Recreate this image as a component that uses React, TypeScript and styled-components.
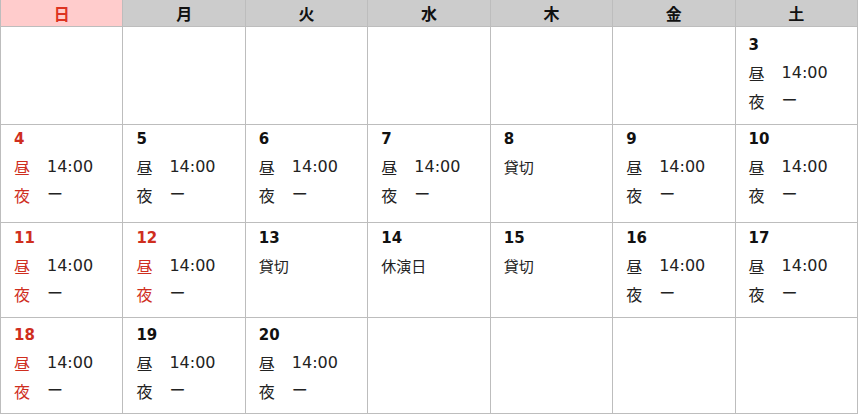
import React from 'react'
import styled, { createGlobalStyle } from 'styled-components'

const GlobalStyle = createGlobalStyle`
  html, body {
    margin: 0;
    padding: 0;
    background: #fff;
  }
  body {
    font-family: 'DejaVu Sans', Verdana, 'Noto Sans CJK JP', sans-serif;
    color: #222;
  }
`

const RED = '#cf2e1e'
const LINE = '#bdbdbd'

type Day =
  | null
  | { date: number; kind: 'show'; noon: string; night: string; holiday?: boolean }
  | { date: number; kind: 'note'; text: string; holiday?: boolean }

const show = (date: number, holiday = false): Day => ({ date, kind: 'show', noon: '14:00', night: 'ー', holiday })
const note = (date: number, text: string): Day => ({ date, kind: 'note', text })

const weekdays = ['日', '月', '火', '水', '木', '金', '土']

const weeks: { height: number; padTop: number; days: Day[] }[] = [
  { height: 98, padTop: 4, days: [null, null, null, null, null, null, show(3)] },
  { height: 98, padTop: 0, days: [show(4), show(5), show(6), show(7), note(8, '貸切'), show(9), show(10)] },
  { height: 95, padTop: 1, days: [show(11), show(12, true), note(13, '貸切'), note(14, '休演日'), note(15, '貸切'), show(16), show(17)] },
  { height: 96, padTop: 3, days: [show(18), show(19), show(20), null, null, null, null] },
]

const Calendar = styled.div`
  width: 858px;
  display: grid;
  grid-template-columns: repeat(7, 1fr);
  border-left: 1px solid ${LINE};
  box-sizing: border-box;
`

const HeaderCell = styled.div<{ $sunday?: boolean }>`
  height: 27px;
  box-sizing: border-box;
  border-right: 1px solid ${LINE};
  border-bottom: 1px solid ${LINE};
  background: ${(p) => (p.$sunday ? '#ffcccc' : '#cccccc')};
  color: ${(p) => (p.$sunday ? '#dd3322' : '#111')};
  display: flex;
  align-items: center;
  justify-content: center;
  font-family: 'Noto Sans CJK JP', sans-serif;
  font-weight: 700;
  font-size: 16px;
`

const DayCell = styled.div<{ $height: number; $padTop: number; $red?: boolean }>`
  height: ${(p) => p.$height}px;
  box-sizing: border-box;
  border-right: 1px solid ${LINE};
  border-bottom: 1px solid ${LINE};
  padding: ${(p) => p.$padTop}px 8px 0 13px;
  color: ${(p) => (p.$red ? RED : '#222')};
  display: flex;
  flex-direction: column;
`

const DayNumber = styled.div<{ $red?: boolean }>`
  line-height: 28px;
  font-size: 15px;
  font-weight: 700;
  color: ${(p) => (p.$red ? RED : '#111')};
`

const Slot = styled.div`
  display: flex;
  align-items: center;
  line-height: 28px;
  font-size: 16px;
`

const Label = styled.span`
  width: 33px;
  font-family: 'Noto Sans CJK JP', sans-serif;
`

const Value = styled.span`
  color: #222;
  font-family: 'DejaVu Sans', Verdana, 'Noto Sans CJK JP', sans-serif;
`

const Note = styled.div`
  line-height: 28px;
  font-size: 15px;
  font-family: 'Noto Sans CJK JP', sans-serif;
  color: #222;
`

const Cell = ({ day, sunday, height, padTop }: { day: Day; sunday: boolean; height: number; padTop: number }) => {
  const red = sunday || !!day?.holiday
  return (
    <DayCell $height={height} $padTop={padTop} $red={red}>
      {day && (
        <>
          <DayNumber $red={red}>{day.date}</DayNumber>
          {day.kind === 'show' ? (
            <>
              <Slot>
                <Label>昼</Label>
                <Value>{day.noon}</Value>
              </Slot>
              <Slot>
                <Label>夜</Label>
                <Value>{day.night}</Value>
              </Slot>
            </>
          ) : (
            <Note>{day.text}</Note>
          )}
        </>
      )}
    </DayCell>
  )
}

const App = () => (
  <>
    <GlobalStyle />
    <Calendar>
      {weekdays.map((w, i) => (
        <HeaderCell key={w} $sunday={i === 0}>
          {w}
        </HeaderCell>
      ))}
      {weeks.map((week, wi) =>
        week.days.map((day, di) => (
          <Cell key={`${wi}-${di}`} day={day} sunday={di === 0} height={week.height} padTop={week.padTop} />
        ))
      )}
    </Calendar>
  </>
)

export default App
